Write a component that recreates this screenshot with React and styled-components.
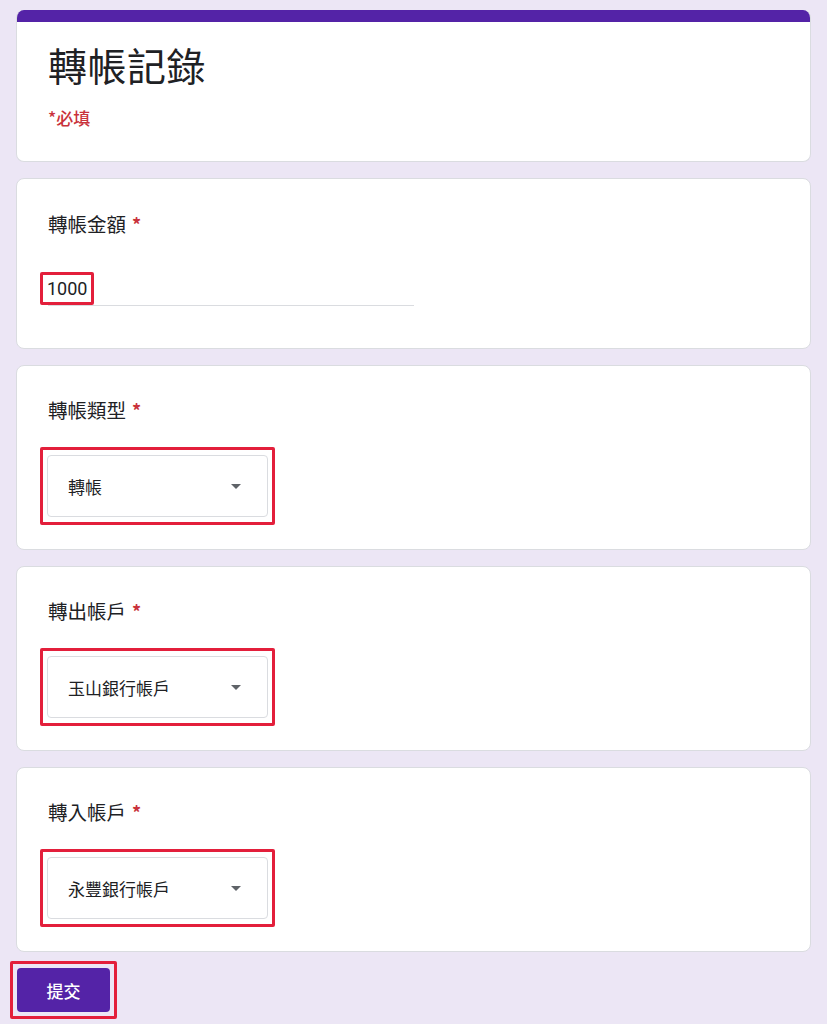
import styled, { createGlobalStyle } from "styled-components";

const GlobalStyle = createGlobalStyle`
  * {
    box-sizing: border-box;
  }
  body {
    margin: 0;
    background: #ece6f5;
    font-family: "Roboto", "Noto Sans CJK TC", sans-serif;
    color: #202124;
  }
`;

const fields = [
  { label: "轉帳類型", value: "轉帳" },
  { label: "轉出帳戶", value: "玉山銀行帳戶" },
  { label: "轉入帳戶", value: "永豐銀行帳戶" },
];

function App() {
  return (
    <Page>
      <GlobalStyle />
      <HeaderCard>
        <TopBar />
        <HeaderBody>
          <Title>轉帳記錄</Title>
          <Required>*必填</Required>
        </HeaderBody>
      </HeaderCard>

      <Card>
        <Label>
          轉帳金額 <Star>*</Star>
        </Label>
        <InputLine>
          <Highlight $pad="0 4px">
            <InputText>1000</InputText>
          </Highlight>
        </InputLine>
      </Card>

      {fields.map((f) => (
        <Card key={f.label} $select>
          <Label>
            {f.label} <Star>*</Star>
          </Label>
          <Highlight $pad="5px 4px">
            <Select>
              <span>{f.value}</span>
              <Arrow viewBox="0 0 10 5">
                <path d="M0 0 L10 0 L5 5 Z" />
              </Arrow>
            </Select>
          </Highlight>
        </Card>
      ))}

      <Footer>
        <Highlight $pad="4px">
          <Submit>提交</Submit>
        </Highlight>
      </Footer>
    </Page>
  );
}

export default App;

const Page = styled.div`
  padding: 10px 16px 0;
  display: flex;
  flex-direction: column;
  gap: 16px;
`;

const HeaderCard = styled.div`
  background: #fff;
  border: 1px solid #dadce0;
  border-top: none;
  border-radius: 8px;
  overflow: hidden;
`;

const TopBar = styled.div`
  height: 12px;
  background: #5423a7;
`;

const HeaderBody = styled.div`
  padding: 18px 31px 31px;
`;

const Title = styled.h1`
  margin: 0;
  font-family: "Noto Sans CJK TC", sans-serif;
  font-size: 39px;
  font-weight: 400;
  line-height: 48px;
  letter-spacing: 0.5px;
`;

const Required = styled.div`
  margin-top: 18px;
  color: #c9323b;
  font-family: "Noto Sans CJK TC", sans-serif;
  font-size: 17px;
  font-weight: 500;
  line-height: 24px;
`;

const Card = styled.div`
  background: #fff;
  border: 1px solid #dadce0;
  border-radius: 8px;
  padding: ${(p) => (p.$select ? "32px 31px 24px" : "33px 31px 42px")};
  display: flex;
  flex-direction: column;
  align-items: flex-start;
  gap: ${(p) => (p.$select ? "25px" : "36px")};
`;

const Label = styled.div`
  font-family: "Noto Sans CJK TC", sans-serif;
  font-size: 19.5px;
  line-height: 24px;
  display: flex;
  align-items: center;
  gap: 6px;
`;

const Star = styled.span`
  color: #c9323b;
  font-size: 18px;
  font-weight: 700;
`;

const InputLine = styled.div`
  width: 366px;
  border-bottom: 1px solid #dadce0;
  display: flex;
`;

const Highlight = styled.div`
  display: inline-flex;
  border: 3px solid #e31f3b;
  border-radius: 2px;
  padding: ${(p) => p.$pad};
  margin-left: -8px;
`;

const InputText = styled.span`
  font-size: 18px;
  line-height: 27px;
  color: #202124;
`;

const Select = styled.div`
  width: 221px;
  height: 62px;
  border: 1px solid #dadce0;
  border-radius: 4px;
  padding: 0 26px 0 20px;
  display: flex;
  align-items: center;
  justify-content: space-between;
  font-family: "Noto Sans CJK TC", sans-serif;
  font-size: 17px;
  color: #202124;
`;

const Arrow = styled.svg`
  width: 10px;
  height: 5px;
  fill: #5f6368;
`;

const Footer = styled.div`
  margin-top: -7px;
  padding-bottom: 4px;
  display: flex;
  & > div {
    margin-left: -6px;
  }
`;

const Submit = styled.button`
  width: 93px;
  height: 44px;
  border: none;
  border-radius: 4px;
  background: #5423a7;
  color: #fff;
  font-family: "Noto Sans CJK TC", sans-serif;
  font-size: 17px;
  font-weight: 500;
`;
